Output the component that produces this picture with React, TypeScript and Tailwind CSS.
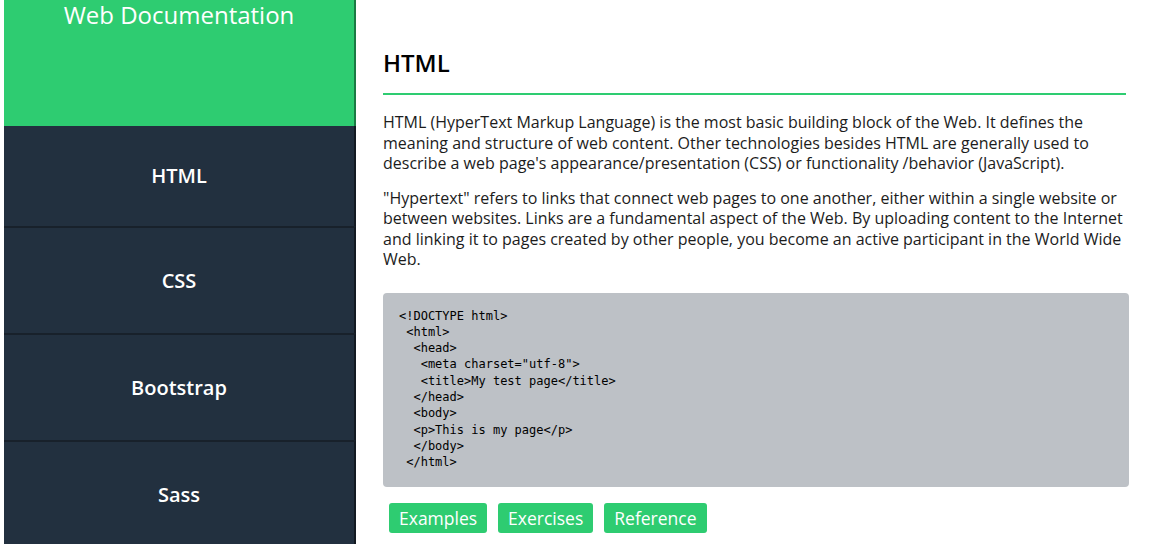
const navItems = ["HTML", "CSS", "Bootstrap", "Sass"];

const codeLines = [
  "<!DOCTYPE html>",
  " <html>",
  "  <head>",
  "   <meta charset=\"utf-8\">",
  "   <title>My test page</title>",
  "  </head>",
  "  <body>",
  "  <p>This is my page</p>",
  "  </body>",
  " </html>",
];

function Sidebar() {
  return (
    <nav className="ml-1 flex w-[352px] shrink-0 flex-col bg-[#22303f]">
      <header className="h-[126px] shrink-0 border-r-2 border-black/40 bg-[#2ecc71] text-center">
        <h1 className="text-[24px] leading-[30px] text-white">Web Documentation</h1>
      </header>
      {navItems.map((item, i) => (
        <a
          key={item}
          href="#"
          className={
            i === 0
              ? "flex h-[100px] shrink-0 items-center justify-center border-r-2 border-r-[#131a22] text-[20px] font-semibold text-white"
              : "flex h-[107px] shrink-0 items-center justify-center border-r-2 border-t-2 border-r-[#131a22] border-t-[#18212b] text-[20px] font-semibold text-white"
          }
        >
          {item}
        </a>
      ))}
      <div className="flex-1 border-r-2 border-r-[#131a22]" />
    </nav>
  );
}

export default function App() {
  return (
    <div className="flex h-[544px] overflow-hidden bg-white font-['Open_Sans',sans-serif] text-[#1c1c1c]">
      <Sidebar />
      <main className="min-w-0 flex-1 pl-[27px] pr-[32px] pt-[47px]">
        <h2 className="text-[24px] font-semibold leading-[32px] text-black">HTML</h2>
        <div className="mr-[3px] mt-[14px] h-[2px] bg-[#2ecc71]" />
        <p className="mt-[17px] text-[16px] leading-[20.5px]">
          HTML (HyperText Markup Language) is the most basic building block of the Web. It defines the meaning and
          structure of web content. Other technologies besides HTML are generally used to describe a web page's
          appearance/presentation (CSS) or functionality /behavior (JavaScript).
        </p>
        <p className="mt-[14px] text-[16px] leading-[20.5px]">
          "Hypertext" refers to links that connect web pages to one another, either within a single website or between
          websites. Links are a fundamental aspect of the Web. By uploading content to the Internet and linking it to
          pages created by other people, you become an active participant in the World Wide Web.
        </p>
        <pre className="mt-[23px] rounded bg-[#bdc1c6] px-4 pb-[17px] pt-[15px] font-['DejaVu_Sans_Mono',monospace] text-[12px] leading-[16.3px] text-black">
          {codeLines.join("\n")}
        </pre>
        <div className="mt-4 flex gap-[11px] pl-[6px]">
          {["Examples", "Exercises", "Reference"].map((b) => (
            <a
              key={b}
              href="#"
              className="flex h-[30px] items-center rounded-[3px] bg-[#2ecc71] px-[10px] text-[17.5px] text-white"
            >
              {b}
            </a>
          ))}
        </div>
      </main>
    </div>
  );
}
